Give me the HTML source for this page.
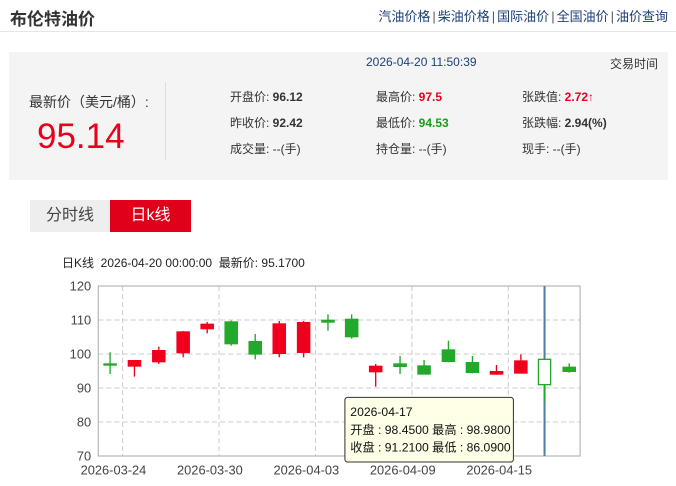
<!DOCTYPE html>
<html><head><meta charset="utf-8"><style>
*{margin:0;padding:0;box-sizing:border-box}
body{width:676px;height:486px;background:#fff;font-family:"Liberation Sans","Noto Sans CJK SC",sans-serif;position:relative;overflow:hidden;color:#333}
.a{position:absolute;white-space:nowrap}
.title{left:10px;top:5px;font-size:17px;font-weight:bold;color:#333}
.links{right:8px;top:6px;font-size:13px;color:#1c3f75}
.links span{color:#555;margin:0 2px}
.hr{left:0;top:31px;width:676px;height:1px;background:#e6e6e6}
.box{left:9px;top:52px;width:659px;height:128px;background:#f4f4f4}
.f{font-size:12px;color:#333}
.f b{font-weight:bold}
.red{color:#e8001c}.green{color:#1a9a1a}
</style></head><body>
<div class="a title">布伦特油价</div>
<div class="a links">汽油价格<span>|</span>柴油价格<span>|</span>国际油价<span>|</span>全国油价<span>|</span>油价查询</div>
<div class="a hr"></div>
<div class="a box"></div>
<div class="a f" style="left:366px;top:55px;color:#1c3f75">2026-04-20 11:50:39</div>
<div class="a f" style="left:610px;top:55px">交易时间</div>
<div class="a" style="left:29px;top:92px;font-size:14px;color:#333">最新价（美元/桶）:</div>
<div class="a" style="left:37px;top:117px;font-size:35px;color:#e8001c">95.14</div>
<div class="a" style="left:165px;top:82px;width:1px;height:78px;background:#ddd"></div>
<div class="a f" style="left:230px;top:88px">开盘价: <b>96.12</b></div>
<div class="a f" style="left:230px;top:114px">昨收价: <b>92.42</b></div>
<div class="a f" style="left:230px;top:140px">成交量: --(手)</div>
<div class="a f" style="left:376px;top:88px">最高价: <b class="red">97.5</b></div>
<div class="a f" style="left:376px;top:114px">最低价: <b class="green">94.53</b></div>
<div class="a f" style="left:376px;top:140px">持仓量: --(手)</div>
<div class="a f" style="left:522px;top:88px">张跌值: <b class="red">2.72</b><span class="red">↑</span></div>
<div class="a f" style="left:522px;top:114px">张跌幅: <b>2.94(%)</b></div>
<div class="a f" style="left:522px;top:140px">现手: --(手)</div>
<div class="a" style="left:30px;top:200px;width:80px;height:32px;background:#eee;font-size:16px;line-height:32px;text-align:center;color:#444">分时线</div>
<div class="a" style="left:110px;top:200px;width:81px;height:32px;background:#e0001a;font-size:16px;line-height:32px;text-align:center;color:#fff">日k线</div>
<div class="a" style="left:62px;top:254px;font-size:12px;color:#222">日K线&nbsp; 2026-04-20 00:00:00&nbsp; 最新价: 95.1700</div>
<svg class="a" style="left:60px;top:250px" width="538" height="236" viewBox="0 0 1590 708" preserveAspectRatio="none">
<g stroke="#ccc" stroke-width="3" stroke-dasharray="15,9" fill="none">
<line x1="113" y1="210" x2="1537" y2="210"/><line x1="113" y1="312" x2="1537" y2="312"/><line x1="113" y1="414" x2="1537" y2="414"/><line x1="113" y1="516" x2="1537" y2="516"/>
<line x1="185" y1="108" x2="185" y2="618"/><line x1="470" y1="108" x2="470" y2="618"/><line x1="755" y1="108" x2="755" y2="618"/><line x1="1040" y1="108" x2="1040" y2="618"/><line x1="1325" y1="108" x2="1325" y2="618"/>
</g>
<rect x="113" y="108" width="1424" height="510" fill="none" stroke="#aaa" stroke-width="3"/>
<g font-size="38" fill="#444" text-anchor="end" font-family="Liberation Sans,sans-serif">
<text x="92" y="121">120</text><text x="92" y="223">110</text><text x="92" y="325">100</text><text x="92" y="427">90</text><text x="92" y="529">80</text><text x="92" y="631">70</text>
</g>
<g font-size="38" fill="#444" text-anchor="middle" font-family="Liberation Sans,sans-serif">
<text x="158" y="674">2026-03-24</text><text x="443" y="674">2026-03-30</text><text x="728" y="674">2026-04-03</text><text x="1013" y="674">2026-04-09</text><text x="1298" y="674">2026-04-15</text>
</g>
<rect x="1429" y="108" width="6" height="510" fill="#4a7fa8"/>
<g stroke-width="4">
<g stroke="#22a82a" fill="#22a82a"><line x1="148" y1="307" x2="148" y2="372"/><rect x="130" y="342" width="36" height="3"/></g>
<g stroke="#f0001c" fill="#f0001c">
<line x1="220" y1="332" x2="220" y2="380"/><rect x="202" y="332" width="36" height="16"/>
<line x1="292" y1="290" x2="292" y2="342"/><rect x="274" y="302" width="36" height="33"/>
<line x1="364" y1="243" x2="364" y2="322"/><rect x="346" y="246" width="36" height="62"/>
<line x1="435" y1="216" x2="435" y2="250"/><rect x="417" y="223" width="36" height="13"/>
<line x1="648" y1="213" x2="648" y2="322"/><rect x="630" y="222" width="36" height="88"/>
<line x1="720" y1="213" x2="720" y2="322"/><rect x="702" y="218" width="36" height="89"/>
<line x1="933" y1="342" x2="933" y2="410"/><rect x="915" y="349" width="36" height="16"/>
<line x1="1290" y1="345" x2="1290" y2="374"/><rect x="1272" y="365" width="36" height="7"/>
<line x1="1362" y1="313" x2="1362" y2="369"/><rect x="1344" y="333" width="36" height="36"/>
</g>
<g stroke="#22a82a" fill="#22a82a">
<line x1="506" y1="212" x2="506" y2="287"/><rect x="488" y="216" width="36" height="65"/>
<line x1="577" y1="252" x2="577" y2="328"/><rect x="559" y="275" width="36" height="37"/>
<line x1="792" y1="193" x2="792" y2="242"/><rect x="774" y="211" width="36" height="5"/>
<line x1="862" y1="193" x2="862" y2="266"/><rect x="844" y="208" width="36" height="52"/>
<line x1="1005" y1="318" x2="1005" y2="372"/><rect x="987" y="342" width="36" height="7"/>
<line x1="1076" y1="330" x2="1076" y2="372"/><rect x="1058" y="348" width="36" height="24"/>
<line x1="1148" y1="272" x2="1148" y2="337"/><rect x="1130" y="300" width="36" height="34"/>
<line x1="1219" y1="318" x2="1219" y2="370"/><rect x="1201" y="338" width="36" height="29"/>
<line x1="1505" y1="340" x2="1505" y2="368"/><rect x="1487" y="352" width="36" height="12"/>
<line x1="1432" y1="404" x2="1432" y2="455"/><rect x="1414" y="328" width="36" height="76" fill="#fff"/>
</g>
</g>
<rect x="842" y="442" width="498" height="194" rx="8" fill="#fffee6" stroke="#333" stroke-width="3"/>
<g font-size="36" fill="#111" font-family="Liberation Sans,Noto Sans CJK SC,sans-serif">
<text x="858" y="498">2026-04-17</text>
<text x="858" y="552">开盘 : 98.4500 最高 : 98.9800</text>
<text x="858" y="604">收盘 : 91.2100 最低 : 86.0900</text>
</g>
</svg>
</body></html>
